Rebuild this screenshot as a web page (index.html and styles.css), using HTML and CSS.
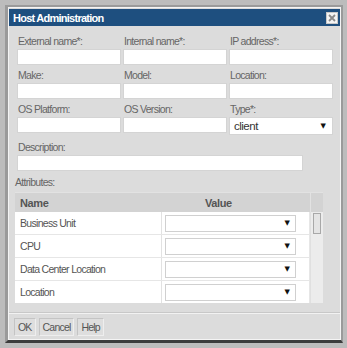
FILE: index.html
```html
<!DOCTYPE html>
<html>
<head>
<meta charset="utf-8">
<link rel="stylesheet" href="styles.css">
</head>
<body>
<div class="dialog">
  <div class="titlebar">
    <span class="title">Host Administration</span>
    <span class="close"><svg width="8" height="8" viewBox="0 0 8 8"><path d="M1 1L7 7M7 1L1 7" stroke="#8a8a8a" stroke-width="1.8"/></svg></span>
  </div>
  <div class="content">
    <div class="grid">
      <div class="field"><label>External name*:</label><div class="input"></div></div>
      <div class="field"><label>Internal name*:</label><div class="input"></div></div>
      <div class="field"><label>IP address*:</label><div class="input"></div></div>
      <div class="field"><label>Make:</label><div class="input"></div></div>
      <div class="field"><label>Model:</label><div class="input"></div></div>
      <div class="field"><label>Location:</label><div class="input"></div></div>
      <div class="field"><label>OS Platform:</label><div class="input"></div></div>
      <div class="field"><label>OS Version:</label><div class="input"></div></div>
      <div class="field"><label>Type*:</label><div class="input select"><span>client</span><span class="arrow">▼</span></div></div>
    </div>
    <div class="field desc"><label>Description:</label><div class="input"></div></div>
    <div class="attr-label">Attributes:</div>
    <div class="table">
      <div class="thead">
        <div class="th name">Name</div>
        <div class="th value">Value</div>
        <div class="th scrollcol"></div>
      </div>
      <div class="tbody">
        <div class="rows">
          <div class="row"><div class="cell name">Business Unit</div><div class="cell value"><div class="sel"><span class="arrow">▼</span></div></div></div>
          <div class="row"><div class="cell name">CPU</div><div class="cell value"><div class="sel"><span class="arrow">▼</span></div></div></div>
          <div class="row"><div class="cell name">Data Center Location</div><div class="cell value"><div class="sel"><span class="arrow">▼</span></div></div></div>
          <div class="row last"><div class="cell name">Location</div><div class="cell value"><div class="sel"><span class="arrow">▼</span></div></div></div>
        </div>
        <div class="scrollbar"><div class="thumb"></div></div>
      </div>
    </div>
  </div>
  <div class="footer">
    <button class="btn">OK</button><button class="btn">Cancel</button><button class="btn">Help</button>
  </div>
</div>
</body>
</html>
```
FILE: styles.css
```css
html, body { margin: 0; padding: 0; }
body {
  width: 347px; height: 348px;
  background: #bcbcbc;
  font-family: "Liberation Sans", Arial, sans-serif;
  font-size: 10.5px;
  letter-spacing: -0.7px;
  color: #666;
  overflow: hidden;
}
.dialog {
  margin: 5px 0 0 5px;
  width: 331px;
  height: 330px;
  border: 2px solid #9a9a9a;
  border-left-width: 3px;
  border-bottom: 3px solid #3c3c3c;
  background: #dcdcdc;
  box-shadow: inset 0 0 0 1px #f4f4f4;
  display: flex;
  flex-direction: column;
  padding: 2px 1px 1px 1px;
}
.titlebar {
  height: 17px;
  background: #1e4f7f;
  display: flex;
  align-items: center;
  justify-content: space-between;
  padding: 0 2px 0 4px;
}
.title { color: #fff; font-weight: bold; font-size: 11px; letter-spacing: -0.75px; }
.close {
  width: 10px; height: 10px; background: #f4f4f4;
  display: flex; align-items: center; justify-content: center;
  border: 1px solid #c8c8c8;
}
.content { padding: 9px 5px 0 8px; flex: 1; }
.grid {
  display: grid;
  grid-template-columns: 104px 104px 104px;
  column-gap: 2px;
  row-gap: 4px;
}
.field label { display: block; height: 12px; line-height: 12px; margin: 0 0 2px 1px; }
.input {
  height: 14px;
  background: #fff;
  border: 1px solid #d4d4d4;
}
.select {
  height: 16px;
  display: flex; align-items: center; justify-content: space-between;
  padding: 0 6px 0 4px; font-size: 11.5px; letter-spacing: -0.5px; color: #333;
}
.arrow { font-family: "DejaVu Sans", sans-serif; font-size: 7px; color: #111; letter-spacing: 0; }
.desc { margin-top: 6px; }
.desc .input { width: 284px; }
.attr-label { margin: 5px 0 4px -2px; height: 12px; line-height: 12px; }
.table { width: 308px; margin-left: -2px; }
.thead {
  display: flex; height: 20px; background: #d3d3d3;
  border-top: 1px solid #e2e2e2;
  box-sizing: border-box;
  font-weight: bold; color: #555; font-size: 11px; letter-spacing: -0.4px;
}
.th { display: flex; align-items: center; }
.th.name { width: 147px; padding-left: 5px; box-sizing: border-box; }
.th.value { width: 148px; padding-left: 43px; box-sizing: border-box; }
.th.scrollcol { flex: 1; border-left: 1px solid #e2e2e2; }
.tbody { display: flex; height: 91px; background: #fff; }
.rows { width: 295px; }
.row { display: flex; height: 23px; border-bottom: 1px solid #e6e6e6; box-sizing: border-box; }
.row.last { border-bottom: none; height: 22px; }
.cell { display: flex; align-items: center; }
.cell.name { width: 147px; padding-left: 5px; box-sizing: border-box; border-right: 1px solid #e2e2e2; color: #555; }
.cell.value { width: 148px; padding-left: 3px; box-sizing: border-box; border-right: 1px solid #e6e6e6; }
.sel {
  width: 124px; height: 15px; border: 1px solid #d0d0d0; background: #fff;
  display: flex; align-items: center; justify-content: flex-end; padding-right: 5px;
}
.scrollbar { flex: 1; background: #ececec; border-left: 1px solid #e0e0e0; }
.thumb { width: 6px; height: 19px; margin: 1px 0 0 2px; border: 1px solid #a8a8a8; background: #e4e4e4; }
.footer {
  border-top: 1px solid #f2f2f2;
  box-shadow: 0 -1px 0 #c8c8c8;
  height: 25px;
  display: flex;
  align-items: center;
  padding-left: 5px;
  gap: 3px;
}
.btn {
  font-family: "Liberation Sans", Arial, sans-serif;
  font-size: 10.5px;
  letter-spacing: -0.8px;
  color: #555;
  background: #dedede;
  border: 1px solid #c4c4c4;
  border-right-color: #eeeeee;
  border-bottom-color: #eeeeee;
  height: 18px;
  padding: 0 3px;
  margin: 0;
}
```
